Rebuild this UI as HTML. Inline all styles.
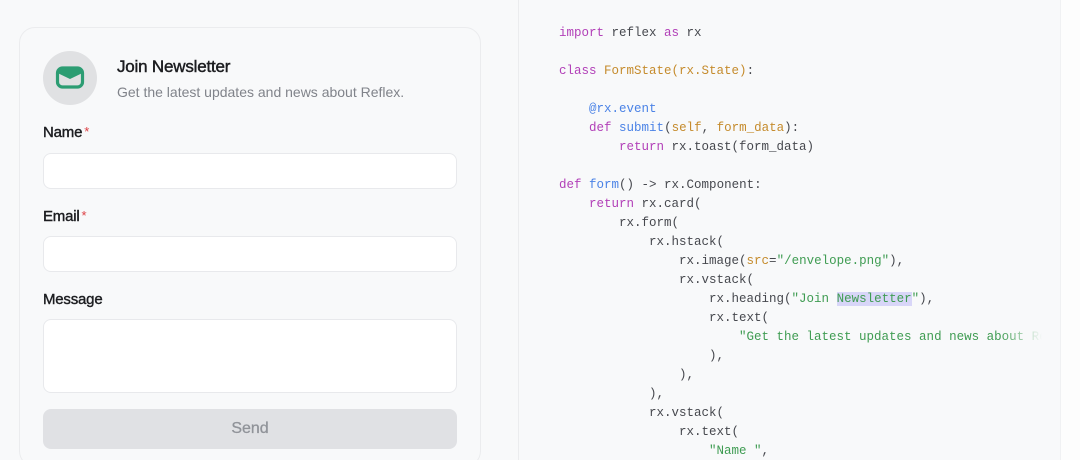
<!DOCTYPE html>
<html><head><style>
*{box-sizing:border-box;margin:0;padding:0}
html,body{width:1080px;height:460px;overflow:hidden}
body{background:#f8f9fa;font-family:"Liberation Sans",sans-serif;position:relative}
.left{position:absolute;left:0;top:0;width:519px;height:460px;background:#f8f9fa;border-right:1px solid #ebecee}
.card{position:absolute;left:19px;top:27px;width:462px;height:440px;border:1px solid #ebecee;border-radius:16px;background:#f8f9fa}
.ic{position:absolute;left:43px;top:51px;width:54px;height:54px;border-radius:50%;background:#e0e1e3}
.t1{position:absolute;left:117px;top:57px;font-size:17px;color:#1c1d20;letter-spacing:-0.2px;-webkit-text-stroke:0.45px #1c1d20}
.t2{position:absolute;left:117px;top:84px;font-size:14px;color:#80838a}
.lb{position:absolute;left:43px;font-size:15px;color:#1c1d20;letter-spacing:-0.2px;-webkit-text-stroke:0.4px #1c1d20}
.lb span{color:#dc3e42;-webkit-text-stroke:0;font-size:13px;margin-left:2px;vertical-align:top}
.in{position:absolute;left:43px;width:414px;background:#fff;border:1px solid #e8e9ec;border-radius:8px}
.btn{position:absolute;left:43px;top:409px;width:414px;height:40px;background:#e0e1e4;border-radius:8px;color:#909399;font-size:16px;-webkit-text-stroke:0.3px #909399;text-align:center;line-height:40px}
.right{position:absolute;left:520px;top:0;width:540px;height:460px;background:#f8f9fa}
.strip{position:absolute;left:1060px;top:0;width:20px;height:460px;background:#fdfdfd;border-left:1px solid #f0f1f3}
pre{position:absolute;left:559px;top:24px;font-family:"Liberation Mono",monospace;font-size:12.5px;line-height:19px;color:#46484e}
.k{color:#b240b8}.f{color:#c58b2c}.b{color:#4a82e6}.s{color:#3f9c52}.hl{background:#d8d6f8}
.fade{position:absolute;left:1000px;top:322px;width:60px;height:30px;background:linear-gradient(90deg,rgba(248,249,250,0),#f8f9fa 70%)}
</style></head><body>
<div class="left"></div>
<div class="card"></div>
<div class="ic"><svg width="54" height="54" viewBox="0 0 54 54"><rect x="14.5" y="17" width="25" height="19" rx="5" fill="none" stroke="#2c9d73" stroke-width="3.2"/><path d="M14.5 22 Q14.5 17 19.5 17 H34.5 Q39.5 17 39.5 22 L27 28 Z" fill="#2c9d73"/></svg></div>
<div class="t1">Join Newsletter</div>
<div class="t2">Get the latest updates and news about Reflex.</div>
<div class="lb" style="top:124px">Name<span>*</span></div>
<div class="in" style="top:153px;height:36px"></div>
<div class="lb" style="top:208px">Email<span>*</span></div>
<div class="in" style="top:236px;height:36px"></div>
<div class="lb" style="top:291px">Message</div>
<div class="in" style="top:319px;height:74px"></div>
<div class="btn">Send</div>
<div class="right"></div>
<pre><span class="k">import</span> reflex <span class="k">as</span> rx

<span class="k">class</span> <span class="f">FormState(rx.State)</span>:

    <span class="b">@rx.event</span>
    <span class="k">def</span> <span class="b">submit</span>(<span class="f">self</span>, <span class="f">form_data</span>):
        <span class="k">return</span> rx.toast(form_data)

<span class="k">def</span> <span class="b">form</span>() -&gt; rx.Component:
    <span class="k">return</span> rx.card(
        rx.form(
            rx.hstack(
                rx.image(<span class="f">src</span>=<span class="s">"/envelope.png"</span>),
                rx.vstack(
                    rx.heading(<span class="s">"Join <span class="hl">Newsletter</span>"</span>),
                    rx.text(
                        <span class="s">"Get the latest updates and news about Re</span>
                    ),
                ),
            ),
            rx.vstack(
                rx.text(
                    <span class="s">"Name "</span>,
</pre>
<div class="fade"></div>
<div class="strip"></div>
</body></html>
